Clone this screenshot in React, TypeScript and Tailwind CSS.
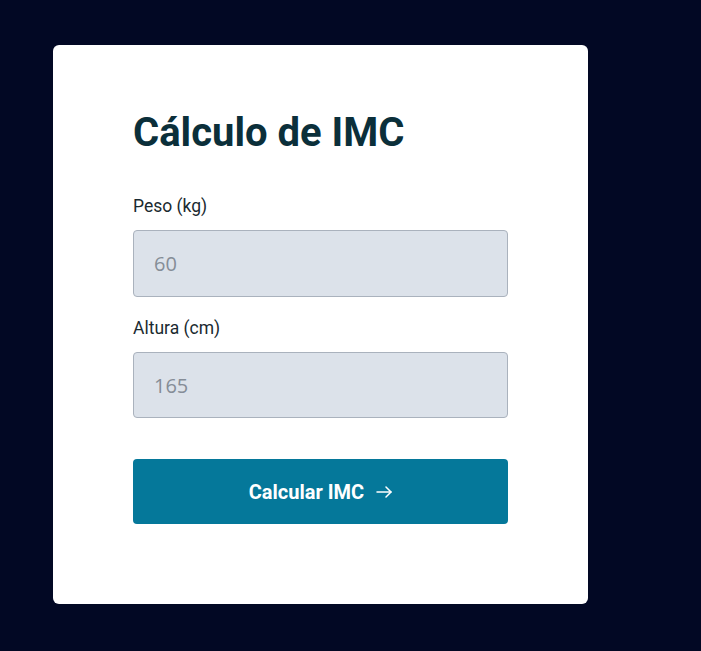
import React from "react";

export default function App() {
  return (
    <div className="min-h-[651px] w-full bg-[#020824] pt-[45px] pl-[53px]" style={{ fontFamily: "Roboto, sans-serif" }}>
      <div className="w-[535px] h-[559px] bg-white rounded-[6px] px-[80px] pt-[64px]">
        <h1 className="text-[40px] leading-[48px] font-bold text-[#0b2f3a]">Cálculo de IMC</h1>
        <div className="mt-[39px] flex flex-col">
          <label className="text-[17.5px] leading-[20px] text-[#1a2a30]">Peso (kg)</label>
          <input
            readOnly
            placeholder="60"
            className="mt-[14px] h-[67px] w-full rounded-[4px] border border-[#aab2bd] bg-[#dce2ea] px-[20px] text-[20px] text-[#7d858f] placeholder:text-[#858d97] outline-none"
            style={{ fontFamily: "'Open Sans', sans-serif" }}
          />
          <label className="mt-[21px] text-[17.5px] leading-[20px] text-[#1a2a30]">Altura (cm)</label>
          <input
            readOnly
            placeholder="165"
            className="mt-[14px] h-[66px] w-full rounded-[4px] border border-[#aab2bd] bg-[#dce2ea] px-[20px] text-[20px] text-[#7d858f] placeholder:text-[#858d97] outline-none"
            style={{ fontFamily: "'Open Sans', sans-serif" }}
          />
          <button className="mt-[41px] h-[65px] w-full rounded-[4px] bg-[#05789a] text-white text-[20px] font-bold flex items-center justify-center gap-[12px]">
            <span>Calcular IMC</span>
            <svg width="16" height="12" viewBox="0 0 16 12" fill="none" stroke="currentColor" strokeWidth="1.5" strokeLinecap="round" strokeLinejoin="round">
              <path d="M1 6h14" />
              <path d="M10 1l5 5-5 5" />
            </svg>
          </button>
        </div>
      </div>
    </div>
  );
}
